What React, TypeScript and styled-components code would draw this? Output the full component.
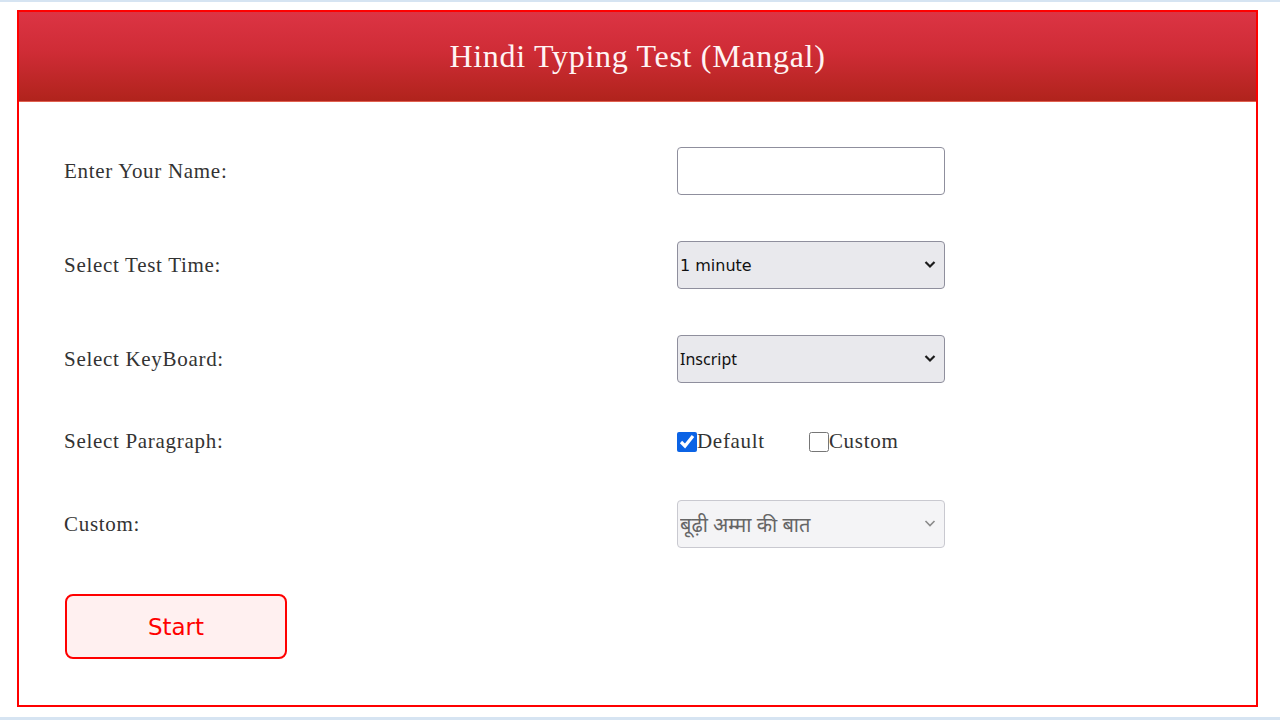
import React from "react";
import styled, { createGlobalStyle } from "styled-components";

const GlobalStyle = createGlobalStyle`
  html, body {
    margin: 0;
    padding: 0;
    background: #ffffff;
  }
  * {
    box-sizing: border-box;
  }
`;

const Page = styled.div`
  width: 1280px;
  height: 720px;
  border-top: 2px solid #d6e4f2;
  border-bottom: 3px solid #d6e4f2;
  padding: 8px 22px 0 17px;
  overflow: hidden;
`;

const Card = styled.div`
  width: 1241px;
  height: 697px;
  border: 2px solid #ff0000;
  display: flex;
  flex-direction: column;
`;

const Header = styled.div`
  height: 90px;
  display: flex;
  align-items: center;
  justify-content: center;
  background: linear-gradient(180deg, #dc3444 0%, #cf2c36 45%, #b0231c 100%);
  border-bottom: 1px solid #e0604f;
`;

const Title = styled.h1`
  margin: 0;
  font-family: "Liberation Serif", "Times New Roman", serif;
  font-weight: 400;
  font-size: 32px;
  letter-spacing: 0.7px;
  color: #fff4f4;
`;

const Form = styled.div`
  display: grid;
  grid-template-columns: 613px 1fr;
  row-gap: 46px;
  align-items: center;
  padding: 45px 45px 0 45px;
`;

const Label = styled.label`
  font-family: "Liberation Serif", "Times New Roman", serif;
  font-size: 21px;
  letter-spacing: 0.7px;
  color: #333333;
`;

const TextInput = styled.input`
  width: 268px;
  height: 48px;
  border: 1px solid #8f8f9d;
  border-radius: 4px;
  background: #ffffff;
  padding: 0 6px;
  font-size: 16px;
`;

const SelectWrap = styled.div`
  position: relative;
  width: 268px;
  height: 48px;
`;

const Select = styled.select<{ $font?: string; $size?: number }>`
  appearance: none;
  width: 100%;
  height: 100%;
  border: 1px solid #8f8f9d;
  border-radius: 4px;
  background: #e9e9ed;
  color: #111111;
  padding: 0 30px 0 2px;
  font-family: ${(p) => p.$font || '"DejaVu Sans", sans-serif'};
  font-size: ${(p) => p.$size || 16}px;

  &:disabled {
    background: #f4f4f6;
    border-color: #c9c9d0;
    color: #666666;
    opacity: 1;
  }
`;

const Chevron = styled.svg<{ $muted?: boolean }>`
  position: absolute;
  right: 9px;
  top: 19px;
  width: 12px;
  height: 9px;
  pointer-events: none;
  stroke: ${(p) => (p.$muted ? "#8a8a8a" : "#1c1c1c")};
  stroke-width: ${(p) => (p.$muted ? 1.6 : 2.2)};
  fill: none;
`;

const Options = styled.div`
  display: flex;
  align-items: center;
  gap: 44px;
  height: 24px;
`;

const Option = styled.label`
  display: flex;
  align-items: center;
  font-family: "Liberation Serif", "Times New Roman", serif;
  font-size: 21px;
  letter-spacing: 0.7px;
  color: #333333;
`;

const Check = styled.input`
  width: 20px;
  height: 20px;
  margin: 0;
  accent-color: #0b63e5;
`;

const StartRow = styled.div`
  grid-column: 1 / span 2;
  padding-left: 1px;
`;

const StartButton = styled.button`
  width: 222px;
  height: 65px;
  border: 2px solid #ff0000;
  border-radius: 8px;
  background: #fff0f0;
  color: #ff0000;
  font-family: "DejaVu Sans", Verdana, sans-serif;
  font-size: 23px;
  cursor: pointer;
`;

function ArrowDown({ muted }: { muted?: boolean }) {
  return (
    <Chevron $muted={muted} viewBox="0 0 12 9">
      <polyline points="1.5,2 6,6.5 10.5,2" />
    </Chevron>
  );
}

export default function App() {
  return (
    <>
      <GlobalStyle />
      <Page>
        <Card>
          <Header>
            <Title>Hindi Typing Test (Mangal)</Title>
          </Header>
          <Form>
            <Label>Enter Your Name:</Label>
            <TextInput type="text" />

            <Label>Select Test Time:</Label>
            <SelectWrap>
              <Select defaultValue="1">
                <option value="1">1 minute</option>
                <option value="2">2 minutes</option>
                <option value="5">5 minutes</option>
                <option value="10">10 minutes</option>
              </Select>
              <ArrowDown />
            </SelectWrap>

            <Label>Select KeyBoard:</Label>
            <SelectWrap>
              <Select $font='"Noto Sans", "Open Sans", sans-serif' defaultValue="inscript">
                <option value="inscript">Inscript</option>
                <option value="remington">Remington Gail</option>
              </Select>
              <ArrowDown />
            </SelectWrap>

            <Label>Select Paragraph:</Label>
            <Options>
              <Option>
                <Check type="checkbox" defaultChecked />
                Default
              </Option>
              <Option>
                <Check type="checkbox" />
                Custom
              </Option>
            </Options>

            <Label>Custom:</Label>
            <SelectWrap>
              <Select $font='"Noto Sans", "Lohit Devanagari", sans-serif' $size={20} disabled>
                <option>बूढ़ी अम्मा की बात</option>
              </Select>
              <ArrowDown muted />
            </SelectWrap>

            <StartRow>
              <StartButton>Start</StartButton>
            </StartRow>
          </Form>
        </Card>
      </Page>
    </>
  );
}
